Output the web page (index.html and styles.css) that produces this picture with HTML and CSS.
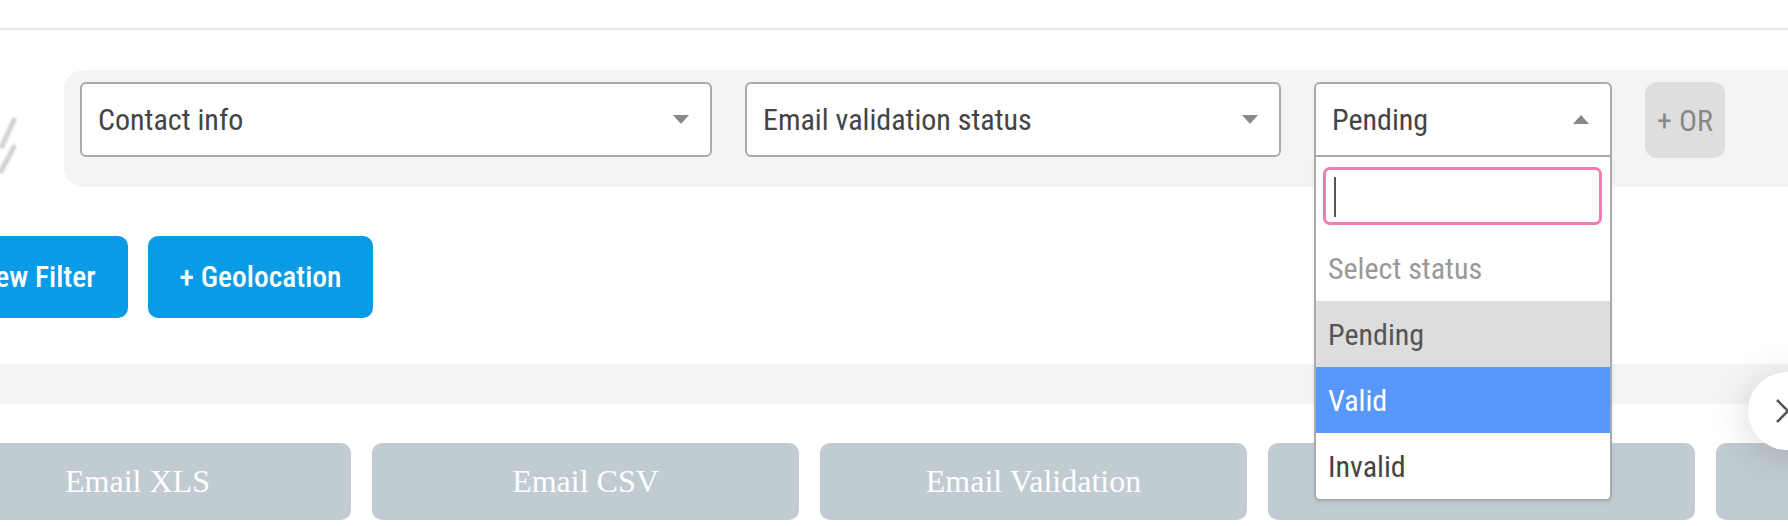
FILE: index.html
```html
<!DOCTYPE html>
<html lang="en">
<head>
    <meta charset="UTF-8">
    <meta name="viewport" content="width=device-width, initial-scale=1.0">
    <title>Contacts filter</title>
    <link rel="stylesheet" href="styles.css">
</head>
<body>
    <div class="page">
        <div class="topbar"></div>

        <div class="filter-area">
            <div class="side-icon">
                <svg width="20" height="60" viewBox="0 0 20 60">
                    <defs>
                        <filter id="soft"><feGaussianBlur stdDeviation="1.2"/></filter>
                    </defs>
                    <g stroke="#d2d2d2" stroke-width="5" filter="url(#soft)">
                        <line x1="15" y1="1" x2="1" y2="31"/>
                        <line x1="15" y1="28" x2="0" y2="56"/>
                    </g>
                </svg>
            </div>

            <div class="filter-panel">
                <div class="select select-wide">
                    <span class="select-value">Contact info</span>
                    <span class="arrow"></span>
                </div>
                <div class="select select-mid">
                    <span class="select-value">Email validation status</span>
                    <span class="arrow"></span>
                </div>
                <div class="select select-narrow is-open">
                    <span class="select-value">Pending</span>
                    <span class="arrow arrow-up"></span>
                    <div class="dropdown">
                        <div class="dropdown-search">
                            <div class="search-field"><span class="caret"></span></div>
                        </div>
                        <ul class="options">
                            <li class="option placeholder">Select status</li>
                            <li class="option selected">Pending</li>
                            <li class="option highlighted">Valid</li>
                            <li class="option">Invalid</li>
                        </ul>
                    </div>
                </div>
                <button class="or-btn">+ OR</button>
            </div>
        </div>

        <div class="actions">
            <button class="btn-blue">+ New Filter</button>
            <button class="btn-blue">+ Geolocation</button>
        </div>

        <div class="exports">
            <div class="band"></div>
            <div class="export-row">
                <button class="export-btn">Email XLS</button>
                <button class="export-btn">Email CSV</button>
                <button class="export-btn">Email Validation</button>
                <!-- label of this one sits under the open dropdown -->
                <button class="export-btn" aria-label="Export"></button>
                <button class="export-btn">Phone XLS</button>
            </div>
            <div class="scroll-next">
                <svg width="78" height="78" viewBox="0 0 78 78">
                    <polyline points="29,28 40,39 29,50" fill="none" stroke="#555" stroke-width="2.5"/>
                </svg>
            </div>
        </div>
    </div>
</body>
</html>
```

FILE: styles.css
```css
body {
    margin: 0;
    background: #fff;
    font-family: "Roboto Condensed", Roboto, sans-serif;
    font-stretch: condensed;
    color: #444;
    overflow: hidden;
}
.page {
    width: 1788px;
    height: 526px;
    overflow: hidden;
}
.topbar {
    height: 28px;
    border-bottom: 2px solid #e6e6e6;
}
.filter-area {
    display: flex;
    margin-top: 40px;
}
.side-icon {
    width: 64px;
    flex: none;
    padding-top: 47px;
}
.side-icon svg {
    display: block;
}
.filter-panel {
    flex: 1;
    margin-right: -120px;
    display: flex;
    align-items: flex-start;
    gap: 33px;
    padding: 12px 16px 29px;
    background: #f4f4f4;
    border-radius: 20px 0 0 20px;
}
.select {
    position: relative;
    flex: none;
    box-sizing: border-box;
    height: 75px;
    display: flex;
    align-items: center;
    justify-content: space-between;
    padding: 0 21px 0 16px;
    background: #fff;
    border: 2px solid #aaa;
    border-radius: 6px;
    font-size: 30px;
    color: #444;
}
.select-wide {
    width: 632px;
}
.select-mid {
    width: 536px;
}
.select-narrow {
    width: 298px;
}
.select.is-open {
    border-bottom-left-radius: 0;
    border-bottom-right-radius: 0;
}
.arrow {
    width: 0;
    height: 0;
    border-left: 8px solid transparent;
    border-right: 8px solid transparent;
    border-top: 9px solid #888;
}
.arrow-up {
    border-top: none;
    border-bottom: 9px solid #888;
}
.dropdown {
    position: absolute;
    top: calc(100% + 2px);
    left: -2px;
    right: -2px;
    z-index: 10;
    background: #fff;
    border: 2px solid #aaa;
    border-top: none;
    border-radius: 0 0 6px 6px;
    box-shadow: 0 2px 4px rgba(0, 0, 0, 0.08);
}
.dropdown-search {
    padding: 10px 8px 10px 7px;
}
.search-field {
    box-sizing: border-box;
    height: 58px;
    padding: 7px 8px;
    border: 3px solid #f07eb2;
    border-radius: 7px;
}
.caret {
    display: block;
    width: 2px;
    height: 40px;
    background: #555;
}
.options {
    list-style: none;
    margin: 0;
    padding: 0;
}
.option {
    height: 66px;
    display: flex;
    align-items: center;
    padding: 0 12px;
    font-size: 30px;
    color: #444;
}
.option.placeholder {
    color: #999;
}
.option.selected {
    background: #ddd;
    color: #555;
}
.option.highlighted {
    background: #5897fb;
    color: #fff;
}
.or-btn {
    flex: none;
    width: 80px;
    height: 76px;
    padding: 0;
    border: none;
    border-radius: 12px;
    background: #dedede;
    color: #888;
    font-family: inherit;
    font-stretch: condensed;
    font-size: 30px;
}
.actions {
    display: flex;
    gap: 20px;
    margin-top: 49px;
    margin-left: -76px;
}
.btn-blue {
    flex: none;
    height: 82px;
    padding: 0 32px;
    border: none;
    border-radius: 10px;
    background: #0a9be6;
    color: #fff;
    font-family: inherit;
    font-stretch: condensed;
    font-weight: 500;
    font-size: 29.5px;
}
.exports {
    position: relative;
    margin-top: 46px;
}
.band {
    height: 40px;
    background: #f3f4f4;
}
.export-row {
    display: flex;
    gap: 21px;
    margin-top: 39px;
    margin-left: -76px;
}
.export-btn {
    flex: none;
    width: 427px;
    height: 77px;
    border: none;
    border-radius: 10px;
    background: #c1cbd2;
    color: #fff;
    font-family: "Liberation Serif", serif;
    font-size: 32px;
}
.scroll-next {
    position: absolute;
    top: 8px;
    right: -38px;
    width: 78px;
    height: 78px;
    border-radius: 50%;
    background: #fff;
    box-shadow: 0 6px 40px rgba(0, 0, 0, 0.16);
}
.scroll-next svg {
    display: block;
}
```
